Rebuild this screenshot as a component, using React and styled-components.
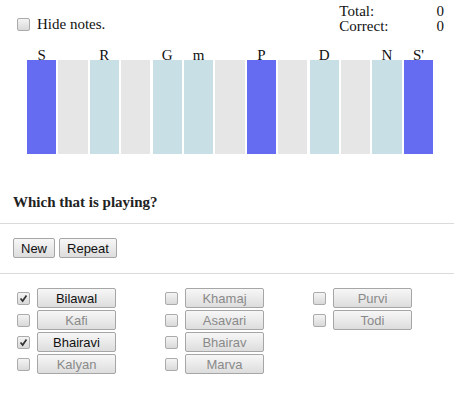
import React, { useState } from 'react';
import styled, { createGlobalStyle } from 'styled-components';

const GlobalStyle = createGlobalStyle`
  body {
    margin: 0;
    background: #fff;
    font-family: "Liberation Serif", "Times New Roman", serif;
    font-size: 15px;
    color: #111;
  }
`;

const Page = styled.div`
  width: 454px;
  padding: 0 0 0 13px;
  box-sizing: border-box;
`;

const TopBar = styled.div`
  display: flex;
  justify-content: space-between;
  align-items: flex-start;
  height: 48px;
`;

const HideLabel = styled.label`
  display: flex;
  align-items: center;
  margin-top: 16px;
  line-height: 16px;
`;

const checkSvg = "data:image/svg+xml;utf8,<svg xmlns='http://www.w3.org/2000/svg' viewBox='0 0 13 13'><path d='M3 6.5 L5.5 9.5 L10 3' fill='none' stroke='%23333' stroke-width='2'/></svg>";

const Check = styled.input`
  appearance: none;
  width: 13px;
  height: 13px;
  margin: 0 7px 0 4px;
  border: 1px solid #ababab;
  border-radius: 2px;
  background: linear-gradient(#f4f4f4, #d9d9d9);
  box-sizing: border-box;

  &:checked {
    background: url("${checkSvg}") center / 11px 11px no-repeat, linear-gradient(#f4f4f4, #d9d9d9);
  }
`;

const Stats = styled.table`
  border-collapse: collapse;
  margin: 4px 10px 0 0;
  line-height: 15px;

  td {
    padding: 0;
  }
  td + td {
    text-align: right;
    padding-left: 48px;
  }
`;

const Keyboard = styled.div`
  display: flex;
  gap: 2.3px;
  width: 406px;
  margin-left: 14px;
`;

const KeyCol = styled.div`
  flex: 1;
  display: flex;
  flex-direction: column;
  align-items: center;
`;

const NoteName = styled.div`
  height: 16px;
  line-height: 15px;
  margin-bottom: -4px;
  position: relative;
  z-index: 1;
`;

const KeyBar = styled.div`
  align-self: stretch;
  height: 94px;
  background: ${p => p.$tone === 'on' ? '#656cf1' : p.$tone === 'scale' ? '#c8e0e5' : '#e6e6e6'};
`;

const Question = styled.h3`
  margin: 40px 0 0;
  font-size: 15px;
  line-height: 17px;
  font-weight: bold;
  color: #222;
`;

const Rule = styled.hr`
  border: none;
  border-top: 1px solid #dadada;
  margin: ${p => p.$top}px 0 0 -13px;
`;

const Controls = styled.div`
  display: flex;
  gap: 4px;
  margin-top: 14px;
`;

const Btn = styled.button`
  font-family: "Liberation Sans", Arial, sans-serif;
  font-size: 13px;
  height: 20px;
  padding: 0 7px;
  border: 1px solid #a6a6a6;
  border-radius: 2px;
  background: linear-gradient(#f7f7f7, #dddddd);
  color: ${p => p.$dim ? '#8a8a8a' : '#111'};
  width: ${p => p.$w ? p.$w + 'px' : 'auto'};
`;

const RagaGrid = styled.div`
  display: grid;
  grid-template-columns: repeat(3, 148px);
  grid-template-rows: repeat(4, 20px);
  row-gap: 2px;
  margin-top: 14px;
`;

const RagaItem = styled.label`
  display: flex;
  align-items: center;
  grid-column: ${p => p.$col};
  grid-row: ${p => p.$row};
`;

const keys = [
  ['S', 'on'], ['', 'off'], ['R', 'scale'], ['', 'off'], ['G', 'scale'], ['m', 'scale'],
  ['', 'off'], ['P', 'on'], ['', 'off'], ['D', 'scale'], ['', 'off'], ['N', 'scale'], ["S'", 'on'],
];

const ragaCols = [
  ['Bilawal', 'Kafi', 'Bhairavi', 'Kalyan'],
  ['Khamaj', 'Asavari', 'Bhairav', 'Marva'],
  ['Purvi', 'Todi'],
];

export default function App() {
  const [checked, setChecked] = useState({ Bilawal: true, Bhairavi: true });

  const toggle = name => setChecked(c => ({ ...c, [name]: !c[name] }));

  return (
    <Page>
      <GlobalStyle />
      <TopBar>
        <HideLabel>
          <Check type="checkbox" />
          Hide notes.
        </HideLabel>
        <Stats>
          <tbody>
            <tr><td>Total:</td><td>0</td></tr>
            <tr><td>Correct:</td><td>0</td></tr>
          </tbody>
        </Stats>
      </TopBar>

      <Keyboard>
        {keys.map(([name, tone], i) => (
          <KeyCol key={i}>
            <NoteName>{name}</NoteName>
            <KeyBar $tone={tone} />
          </KeyCol>
        ))}
      </Keyboard>

      <Question>Which that is playing?</Question>
      <Rule $top={12} />
      <Controls>
        <Btn>New</Btn>
        <Btn>Repeat</Btn>
      </Controls>
      <Rule $top={15} />

      <RagaGrid>
        {ragaCols.map((col, ci) =>
          col.map((name, ri) => (
            <RagaItem key={name} $col={ci + 1} $row={ri + 1}>
              <Check type="checkbox" checked={!!checked[name]} onChange={() => toggle(name)} />
              <Btn $w={79} $dim={!checked[name]} type="button">{name}</Btn>
            </RagaItem>
          ))
        )}
      </RagaGrid>
    </Page>
  );
}
